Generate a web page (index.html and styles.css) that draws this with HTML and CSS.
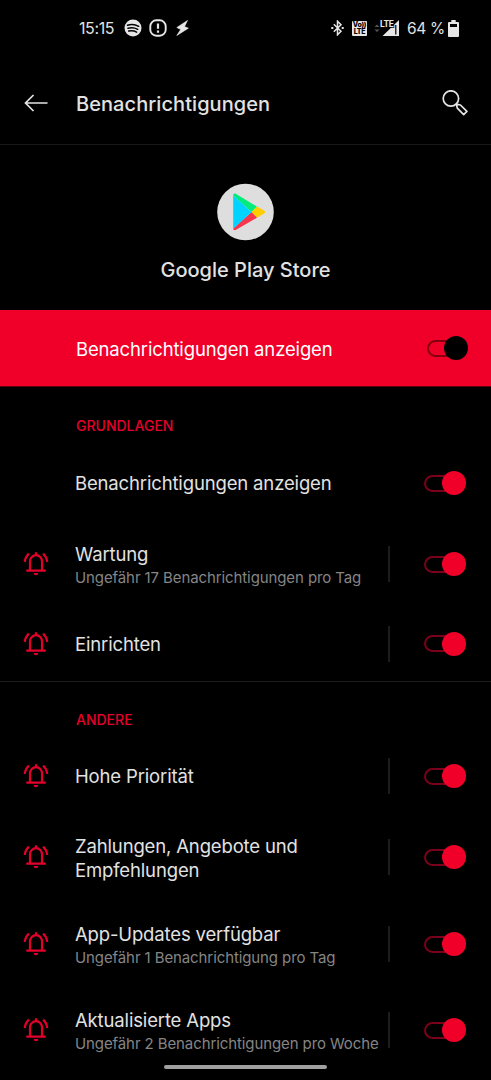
FILE: index.html
```html
<!DOCTYPE html>
<html lang="de">
<head>
  <meta charset="UTF-8" />
  <meta name="viewport" content="width=device-width, initial-scale=1.0" />
  <title>Benachrichtigungen</title>
  <link rel="stylesheet" href="styles.css">
</head>
<body>
  <!-- Icons -->
  <svg class="defs" width="0" height="0">
    <symbol id="bell" viewBox="0 0 26 24">
      <g fill="none" stroke="currentColor" stroke-width="2.200">
        <path d="M7 18.500V9.500a6 6.300 0 0 1 12 0V18.500" />
        <path d="M3.300 18.700h19.400M13 3.500V.3" />
        <path d="M1.800 10C2 6.800 3.300 4 5.900 1.600M24.200 10C24 6.800 22.700 4 20.100 1.600" />
      </g>
      <path d="M10.700 21h4.600a2.300 2.200 0 0 1-4.600 0z" fill="currentColor" />
    </symbol>
  </svg>

  <div class="statusbar">
    <div class="status-left">
      <span class="clock">15:15</span>
      <svg class="spotify" width="18" height="18" viewBox="0 0 18 18">
        <circle cx="9" cy="9" r="8.500" fill="#e6e6e6" />
        <path d="M3.500 6.300c4-1.200 8-.7 11.200 1M4 9.300c3.500-1 6.800-.6 9.700 1M4.700 12.100c2.900-.7 5.500-.4 7.900 1" fill="none" stroke="#000" stroke-width="1.500" stroke-linecap="round" />
      </svg>
      <svg class="alert" width="18" height="18" viewBox="0 0 18 18">
        <rect x="1.300" y="1.300" width="15.400" height="15.400" rx="6" fill="none" stroke="#e6e6e6" stroke-width="1.900" />
        <path d="M9 4.500v5.300M9 11.500v2.200" stroke="#e6e6e6" stroke-width="2.200" />
      </svg>
      <svg class="bolt" width="13" height="16" viewBox="0 0 13 16">
        <path d="M11.500.5L.8 7.500l3.900 2L.8 15.500 12.400 8.200 8.500 6.500z" fill="#e6e6e6" stroke="#e6e6e6" stroke-width=".6" />
      </svg>
    </div>
    <div class="status-right">
      <svg class="bluetooth" width="13" height="16" viewBox="0 0 13 16">
        <path d="M2.800 4.300l7.200 7L6.500 14.800V1.200L10 4.700l-7.200 7" fill="none" stroke="#e6e6e6" stroke-width="1.500" />
        <path d="M.3 8h2M10.700 8h2" stroke="#e6e6e6" stroke-width="1.800" />
      </svg>
      <span class="volte"><b>Vo))</b><b>LTE</b></span>
      <svg class="signal" width="26" height="18" viewBox="0 0 26 18">
        <path d="M.5 8L3 5.500 5.500 8zM.5 10.500L3 13l2.500-2.500z" fill="#555" />
        <path d="M25 1v16H8.500z" fill="#e6e6e6" />
        <path d="M21.800 6v9.500" stroke="#000" stroke-width="1.200" />
        <text x="6" y="7.500" class="lte" stroke="#000" stroke-width="1.500" paint-order="stroke">LTE</text>
      </svg>
      <span class="percent">64 %</span>
      <svg class="battery" width="11" height="17" viewBox="0 0 11 17">
        <path d="M3.300 0h4.400v2H10a1 1 0 0 1 1 1v13a1 1 0 0 1-1 1H1a1 1 0 0 1-1-1V3a1 1 0 0 1 1-1h2.300z" fill="#e6e6e6" />
        <path d="M2 4h7v3H2z" fill="#000" />
      </svg>
    </div>
  </div>

  <header>
    <svg class="back" width="24" height="18" viewBox="0 0 24 18">
      <path d="M9.500 1L1.500 9l8 8M1.500 9h22" fill="none" stroke="#e4e4e4" stroke-width="1.700" />
    </svg>
    <h1>Benachrichtigungen</h1>
    <svg class="search" width="26" height="26" viewBox="0 0 26 26">
      <g fill="none" stroke="#e4e4e4" stroke-width="1.700">
        <circle cx="8.900" cy="8.500" r="7.700" />
        <path d="M14.300 14l1 4.100 6.400 6.500 3.200-3.200-6.500-6.400z" stroke-linejoin="round" />
      </g>
    </svg>
  </header>

  <main>
    <section class="app">
      <svg class="app-logo" width="58" height="58" viewBox="0 0 58 58">
        <circle cx="28.500" cy="29" r="28.300" fill="#dedede" />
        <path d="M16.200 12.500c0-1.700 1.400-2.400 2.900-1.500L40 23.500 34.500 29z" fill="#00ec7c" />
        <path d="M40 23.500l7 4c1.600.9 1.600 2.100 0 3l-7 4.200L34.500 29z" fill="#ffce00" />
        <path d="M34.500 29l5.500 5.700L19.100 46.800c-1.500.9-2.900.3-2.900-1.300z" fill="#f7364e" />
        <path d="M16.200 12.500v33.300L34.500 29z" fill="#00d3ff" />
      </svg>
      <h2>Google Play Store</h2>
    </section>

    <div class="master">
      <span class="title">Benachrichtigungen anzeigen</span>
      <span class="switch dark"></span>
    </div>

    <section class="group">
      <h3>Grundlagen</h3>
      <div class="row">
        <div class="text"><p class="title">Benachrichtigungen anzeigen</p></div>
        <span class="switch"></span>
      </div>
      <div class="row wartung">
        <svg class="bell"><use href="#bell" /></svg>
        <div class="text two-line">
          <p class="title">Wartung</p>
          <p class="sub">Ungefähr 17 Benachrichtigungen pro Tag</p>
        </div>
        <span class="line"></span>
        <span class="switch"></span>
      </div>
      <div class="row einrichten">
        <svg class="bell"><use href="#bell" /></svg>
        <div class="text"><p class="title">Einrichten</p></div>
        <span class="line"></span>
        <span class="switch"></span>
      </div>
    </section>

    <section class="group andere">
      <h3>Andere</h3>
      <div class="row">
        <svg class="bell"><use href="#bell" /></svg>
        <div class="text"><p class="title">Hohe Priorität</p></div>
        <span class="line"></span>
        <span class="switch"></span>
      </div>
      <div class="row zahlungen">
        <svg class="bell"><use href="#bell" /></svg>
        <div class="text two-line"><p class="title">Zahlungen, Angebote und<br>Empfehlungen</p></div>
        <span class="line"></span>
        <span class="switch"></span>
      </div>
      <div class="row updates">
        <svg class="bell"><use href="#bell" /></svg>
        <div class="text two-line">
          <p class="title">App-Updates verfügbar</p>
          <p class="sub">Ungefähr 1 Benachrichtigung pro Tag</p>
        </div>
        <span class="line"></span>
        <span class="switch"></span>
      </div>
      <div class="row apps">
        <svg class="bell"><use href="#bell" /></svg>
        <div class="text two-line">
          <p class="title">Aktualisierte Apps</p>
          <p class="sub">Ungefähr 2 Benachrichtigungen pro Woche</p>
        </div>
        <span class="line"></span>
        <span class="switch"></span>
      </div>
    </section>
  </main>

  <div class="home-bar"></div>
</body>
</html>
```
FILE: styles.css
```css
*,
*::before,
*::after {
  margin: 0;
  padding: 0;
  box-sizing: border-box;
}

body {
  width: 491px;
  height: 1080px;
  overflow: hidden;
  background: #000;
  color: #e2e2e2;
  font-family: Inter, Roboto, sans-serif;
}

svg {
  flex: none;
  display: block;
}

.defs {
  position: absolute;
}

/* Status bar */
.statusbar {
  height: 56px;
  padding: 0 32px 0 79px;
  display: flex;
  justify-content: space-between;
  align-items: center;
  font-size: 16px;
}

.status-left,
.status-right {
  display: flex;
  align-items: center;
}

.clock {
  width: 45px;
  letter-spacing: -0.4px;
}

.alert {
  margin-left: 7px;
}

.bolt {
  margin-left: 9px;
}

.volte {
  width: 15px;
  height: 15px;
  margin-left: 8px;
  background: #e6e6e6;
  color: #000;
  border-radius: 1px;
  font-size: 7px;
  line-height: 7px;
  text-align: center;
  letter-spacing: -0.3px;
}

.volte b {
  display: block;
  font-weight: 800;
}

.signal {
  margin-left: 7px;
}

.lte {
  font-size: 8.5px;
  font-weight: 700;
  letter-spacing: -0.5px;
  fill: #e6e6e6;
}

.percent {
  width: 41px;
  margin-left: 7px;
  font-size: 15.5px;
  letter-spacing: -0.3px;
  white-space: nowrap;
}

/* Header */
header {
  height: 89px;
  padding: 6px 23px 0 24px;
  display: flex;
  align-items: center;
  border-bottom: 1px solid #191919;
}

header h1 {
  flex: 1;
  margin-left: 28px;
  padding-top: 1px;
  font-size: 20px;
  letter-spacing: 0.07px;
  font-weight: 500;
}

/* App */
.app {
  height: 165px;
  padding-top: 38px;
  display: flex;
  flex-direction: column;
  align-items: center;
}

.app h2 {
  margin-top: 16px;
  font-size: 20px;
  line-height: 26px;
  font-weight: 500;
}

.master {
  height: 77px;
  padding: 0 23px 0 76px;
  display: flex;
  justify-content: space-between;
  align-items: center;
  background: #f00029;
  border-bottom: 1px solid #60000f;
  color: #fff;
}

.master .title {
  padding-top: 1px;
}

.title {
  font-size: 18.5px;
  line-height: 24px;
  letter-spacing: -0.15px;
}

.sub {
  font-size: 15px;
  line-height: 23px;
  letter-spacing: -0.1px;
  color: #858585;
  white-space: nowrap;
}

/* Groups */
.group h3 {
  height: 56px;
  padding: 27px 0 0 76px;
  color: #e3002b;
  font-size: 14px;
  line-height: 24px;
  font-weight: 500;
  text-transform: uppercase;
}

.andere {
  border-top: 1px solid #1b1b1b;
}

.andere h3 {
  height: 54px;
  padding-top: 26px;
}

.row {
  height: 80px;
  padding: 0 25px 0 23px;
  display: flex;
  align-items: center;
}

.bell {
  width: 26px;
  height: 24px;
  color: #e3002b;
}

.text {
  flex: 1;
  min-width: 0;
  margin-left: 26px;
}

.text:first-child {
  margin-left: 52px;
}

.text.two-line {
  padding-top: 3px;
}

.zahlungen .two-line {
  padding-top: 2px;
}

.line {
  flex: none;
  width: 2px;
  height: 36px;
  margin-right: 34px;
  background: #1d1d1d;
}

.wartung {
  height: 81px;
  padding-top: 1px;
}

.einrichten {
  height: 77px;
  padding-top: 2px;
}

.zahlungen {
  height: 82px;
}

.updates {
  height: 92px;
}

.apps {
  height: 80px;
}

/* Switch */
.switch {
  flex: none;
  width: 42px;
  height: 24px;
  display: flex;
  align-items: center;
}

.switch::before {
  content: "";
  flex: none;
  width: 30px;
  height: 17px;
  border: 2px solid #7b0019;
  border-radius: 9px;
}

.switch::after {
  content: "";
  flex: none;
  width: 24px;
  height: 24px;
  margin-left: -12px;
  border-radius: 50%;
  background: #f00029;
}

.switch.dark {
  width: 41px;
}

.switch.dark::before {
  border-color: #84000f;
}

.switch.dark::after {
  margin-left: -13px;
  background: #000;
}

.home-bar {
  position: absolute;
  left: 164px;
  top: 1065px;
  width: 163px;
  height: 4px;
  border-radius: 2px;
  background: #a0a0a0;
}
```
